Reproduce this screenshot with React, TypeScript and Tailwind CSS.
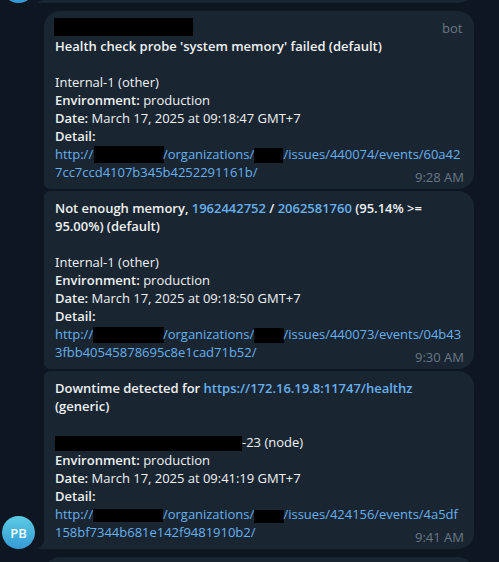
import React from 'react';

type MessageProps = { className: string; children: React.ReactNode; time: string };

function Message({ className, children, time }: MessageProps) {
  return (
    <article className={`relative h-[178px] w-[430px] shrink-0 bg-[#192632] pl-[11px] text-[13px] leading-[18px] text-[#f0f1f2] ${className}`}>
      {children}
      <time className="absolute right-[10px] bottom-[3px] leading-[18px] text-[#697783]">{time}</time>
    </article>
  );
}

function Redacted({ className }: { className: string }) {
  return <span className={`inline-block shrink-0 bg-black ${className}`} />;
}

type UrlProps = { issue: string; start: string; rest: string; host: string; org: string };

function Url({ issue, start, rest, host, org }: UrlProps) {
  return (
    <div className="whitespace-nowrap text-[#67b0ef]">
      <div className="flex h-[18px]">
        <span className="w-[38px]">http://</span>
        <span className="flex w-[70px]"><Redacted className={host} /></span>
        <span className="w-[91px] tracking-[-0.02px]">/organizations/</span>
        <span className="flex w-[30px]"><Redacted className={org} /></span>
        <span className="-ml-[0.5px] tracking-[-0.03px]">/issues/{issue}/events/{start}</span>
      </div>
      <div className="tracking-[-0.01px]">{rest}</div>
    </div>
  );
}

function Details({ date }: { date: string }) {
  return (
    <>
      <p><b className="font-semibold">Environment:</b> production</p>
      <p className="tracking-[-0.02px]"><b className="font-semibold">Date:</b> {date}</p>
      <p><b className="font-semibold">Detail:</b></p>
    </>
  );
}

function InternalHost() {
  return (
    <p className="mt-[18px] h-[18px]">
      <span className="font-['Noto_Sans',sans-serif] leading-none">I</span>nternal-1 (other)
    </p>
  );
}

function Tail({ className }: { className: string }) {
  return (
    <svg className={`absolute h-[10px] w-[6px] fill-[#192632] ${className}`} viewBox="0 0 6 10">
      <path d="M6 0C6 4 4 8 0 9.2V10H6Z" />
    </svg>
  );
}

export default function App() {
  return (
    <main className="relative h-[562px] w-[499px] overflow-hidden bg-[#0e1621] pl-[44px] font-['Open_Sans',sans-serif]">
      <div className="flex flex-col">
        <div className="h-[3px] w-[430px]">
          <div className="-mt-[27px] h-[30px] rounded-br-[16px] bg-[#192632]" />
        </div>
        <div className="mt-[8px] flex flex-col gap-[2px]">
          <Message className="rounded-t-[16px] rounded-br-[16px] rounded-bl-[6px] pt-[26px]" time="9:28 AM">
            <Redacted className="absolute top-[7px] left-[10px] h-[18px] w-[139px]" />
            <span className="absolute top-[8px] right-[11.5px] text-[#697783]">bot</span>
            <p className="font-semibold tracking-[-0.01px]">Health check probe 'system memory' failed (default)</p>
            <InternalHost />
            <Details date="March 17, 2025 at 09:18:47 GMT+7" />
            <Url issue="440074" start="60a42" rest="7cc7ccd4107b345b4252291161b/" host="ml-[1px] mt-px h-[17px] w-[70px]" org="mt-[3px] h-[15px] w-[29px]" />
          </Message>
          <Message className="rounded-l-[6px] rounded-r-[16px] pt-[8px]" time="9:30 AM">
            <p className="font-semibold tracking-[-0.02px]">Not enough memory, <span className="text-[#67b0ef]">1962442752</span> / <span className="text-[#67b0ef]">2062581760</span> (95.14% &gt;=<br />95.00%) (default)</p>
            <InternalHost />
            <Details date="March 17, 2025 at 09:18:50 GMT+7" />
            <Url issue="440073" start="04b43" rest="3fbb40545878695c8e1cad71b52/" host="mt-[2px] h-[16px] w-[71px]" org="mt-[3px] h-[15px] w-[30px]" />
          </Message>
          <Message className="rounded-tl-[6px] rounded-r-[16px] pt-[8px]" time="9:41 AM">
            <p className="font-semibold tracking-[-0.01px]">Downtime detected for <span className="text-[#67b0ef]">https://172.16.19.8:11747/healthz</span><br />(generic)</p>
            <p className="mt-[18px] flex"><Redacted className="mt-[3px] h-[15px] w-[187px]" />-23 (node)</p>
            <Details date="March 17, 2025 at 09:41:19 GMT+7" />
            <Url issue="424156" start="4a5df" rest="158bf7344b681e142f9481910b2/" host="mt-[4px] h-[13px] w-[70px]" org="mt-[5px] h-[13px] w-[30px]" />
            <Tail className="bottom-0 -left-[6px]" />
          </Message>
        </div>
        <div className="mt-[8px] h-[30px] w-[430px] shrink-0 rounded-t-[16px] bg-[#192632]" />
      </div>
      <Tail className="-top-[7px] left-[38px]" />
      <div className="absolute -top-[30px] left-[2px] size-[33px] rounded-full bg-[#359ad4]" />
      <div className="absolute top-[516px] left-[2px] flex size-[33px] items-center justify-center rounded-full bg-linear-to-b from-[#5bcbe3] to-[#359ad4] pt-[2px] text-[13px] font-semibold text-white">PB</div>
    </main>
  );
}
